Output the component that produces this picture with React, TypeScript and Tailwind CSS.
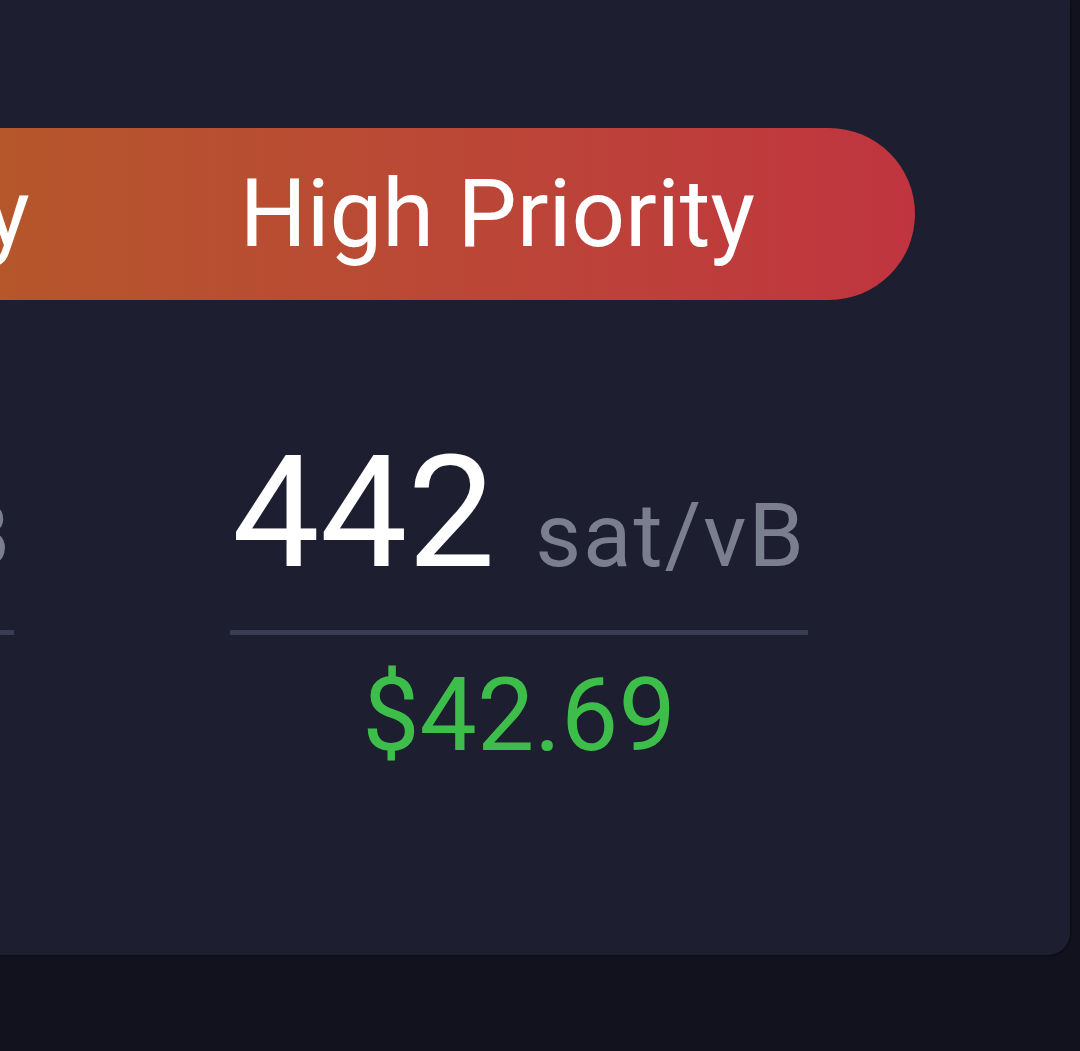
const fees = [
  { value: "289", usd: "$27.91" },
  { value: "442", usd: "$42.69" },
];

export default function App() {
  return (
    <div className="h-[1051px] w-[1080px] overflow-hidden bg-[#11121d] font-['Roboto',sans-serif]">
      {/* panel */}
      <div className="h-[955px] w-[1070px] overflow-hidden rounded-br-[22px] bg-[#1d1e30] shadow-[1px_1px_2px_rgba(0,0,0,0.35)]">
        {/* priority bar */}
        <div className="mt-[128px] flex h-[172px] w-[915px] items-center justify-end gap-[210px] overflow-hidden whitespace-nowrap rounded-r-full bg-gradient-to-r from-[#b5562b] to-[#c0343f] pr-[160px] text-[94px] leading-none text-white">
          <span className="shrink-0">Medium Priority</span>
          <span className="shrink-0">High Priority</span>
        </div>
        {/* fee columns */}
        <div className="ml-[-564px] mt-[135px] flex gap-[216px]">
          {fees.map((fee, i) => (
            <div key={i} className="flex w-[578px] shrink-0 flex-col items-center">
              <div className="flex items-baseline gap-[40px] whitespace-nowrap">
                <span className="text-[156px] leading-none text-white">{fee.value}</span>
                <span className="text-[89px] leading-none tracking-[2px] text-[#7b7e8d]">sat/vB</span>
              </div>
              <div className="mt-[39px] h-[5px] w-full bg-[#3a3c51]" />
              <div className="mt-[29px] text-[102px] leading-none text-[#3dbe4a]">{fee.usd}</div>
            </div>
          ))}
        </div>
      </div>
    </div>
  );
}
